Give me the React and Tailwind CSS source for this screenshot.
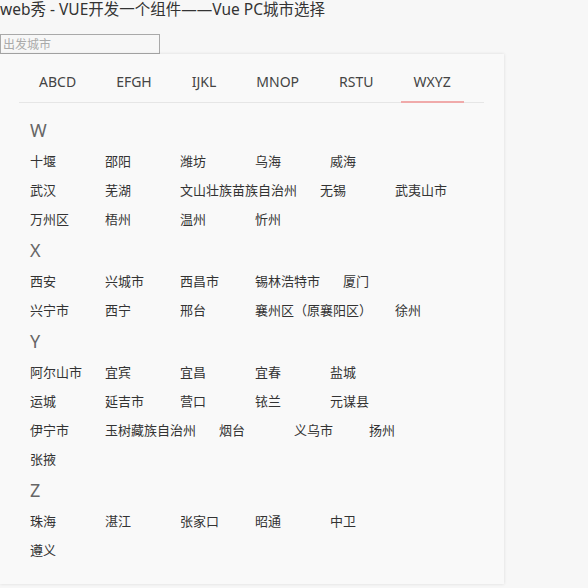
import React from "react";

const tabs = ["ABCD", "EFGH", "IJKL", "MNOP", "RSTU", "WXYZ"];

const groups = [
  {
    letter: "W",
    cities: ["十堰", "邵阳", "潍坊", "乌海", "威海", "武汉", "芜湖", "文山壮族苗族自治州", "无锡", "武夷山市", "万州区", "梧州", "温州", "忻州"],
  },
  {
    letter: "X",
    cities: ["西安", "兴城市", "西昌市", "锡林浩特市", "厦门", "兴宁市", "西宁", "邢台", "襄州区（原襄阳区）", "徐州"],
  },
  {
    letter: "Y",
    cities: ["阿尔山市", "宜宾", "宜昌", "宜春", "盐城", "运城", "延吉市", "营口", "铱兰", "元谋县", "伊宁市", "玉树藏族自治州", "烟台", "义乌市", "扬州", "张掖"],
  },
  {
    letter: "Z",
    cities: ["珠海", "湛江", "张家口", "昭通", "中卫", "遵义"],
  },
];

export default function App() {
  return (
    <div className="min-h-[588px] bg-[#f7f7f7] text-[#333] font-['Noto_Sans','Noto_Sans_CJK_SC',sans-serif]">
      <div className="h-[34px] text-[15.5px] leading-[18px] text-[#333]">web秀 - VUE开发一个组件——Vue PC城市选择</div>
      <input
        placeholder="出发城市"
        className="block w-[160px] h-[20px] border border-[#a9a9a9] bg-transparent px-[2px] text-[12px] leading-[18px] placeholder:text-[#aaa] outline-none"
      />
      <div className="w-[504px] bg-[#f9f9f9] shadow-[0_0_3px_rgba(0,0,0,0.12)] px-[20px] pt-[7px] pb-[19px]">
        <div className="flex h-[42px] border-b border-[#e6e6e6] -ml-[1px]">
          {tabs.map((t) => (
            <div key={t} className="relative mx-[7px] px-[13px] text-[14px] leading-[42px] text-[#444]">
              {t}
              {t === "WXYZ" && <div className="absolute left-0 right-0 bottom-[-1px] h-[2px] bg-[#f0aaaa]" />}
            </div>
          ))}
        </div>
        <div className="w-[454px] pl-[10px] pt-[11px]">
          {groups.map((g) => (
            <div key={g.letter}>
              <div className="h-[33px] text-[18px] leading-[33px] text-[#666]">{g.letter}</div>
              <div className="flex flex-wrap">
                {g.cities.map((c) => (
                  <div key={c} className="min-w-[52px] mr-[23px] text-[13px] leading-[29px] text-[#333]">
                    {c}
                  </div>
                ))}
              </div>
            </div>
          ))}
        </div>
      </div>
    </div>
  );
}
